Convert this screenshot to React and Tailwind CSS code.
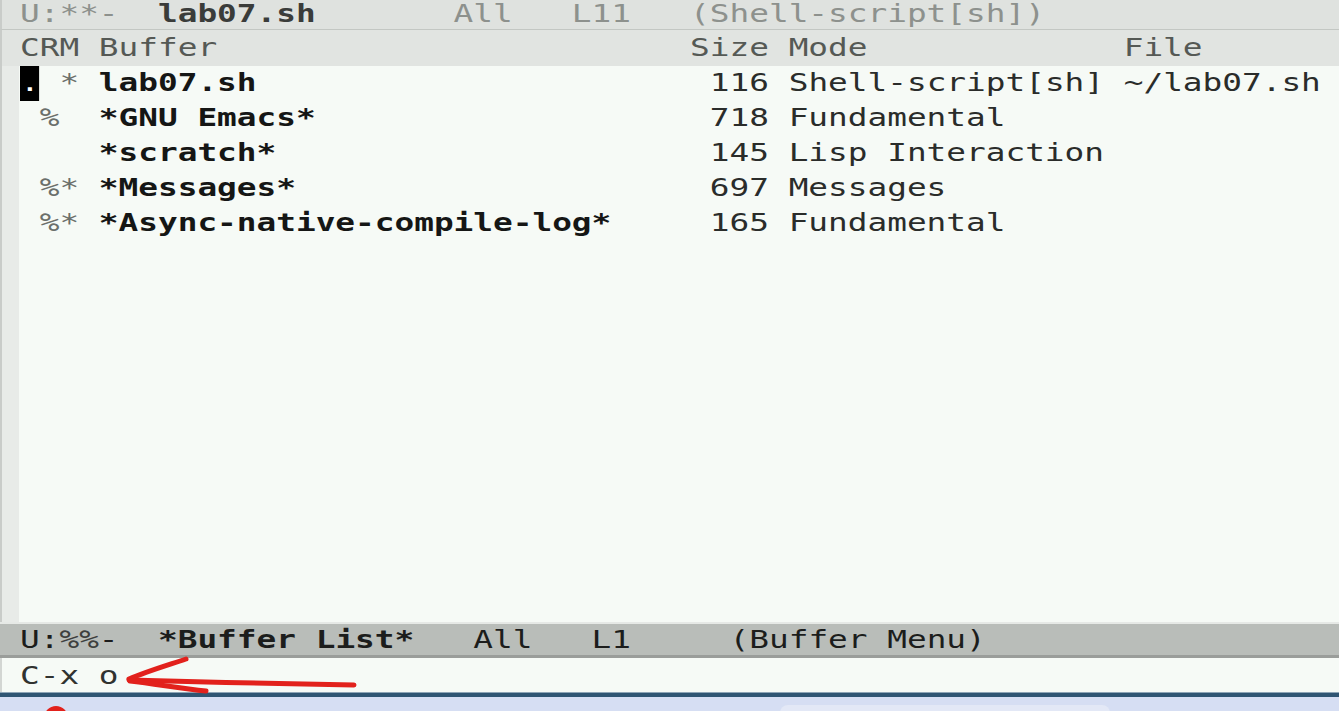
import React from "react";

function Line({ children, className = "" }) {
  return (
    <div className={`pl-[20px] whitespace-pre ${className}`}>
      <span className="inline-block origin-left scale-x-[1.364]">{children}</span>
    </div>
  );
}

const rows = [
  { crm: " * ", name: "lab07.sh", size: "116", mode: "Shell-script[sh]", file: "~/lab07.sh", cursor: true },
  { crm: " %  ", name: "*GNU Emacs*", size: "718", mode: "Fundamental", file: "" },
  { crm: "    ", name: "*scratch*", size: "145", mode: "Lisp Interaction", file: "" },
  { crm: " %* ", name: "*Messages*", size: "697", mode: "Messages", file: "" },
  { crm: " %* ", name: "*Async-native-compile-log*", size: "165", mode: "Fundamental", file: "" },
];

function pad(s, n) {
  return s + " ".repeat(Math.max(0, n - s.length));
}

export default function App() {
  return (
    <div className="relative flex h-[711px] w-[1339px] flex-col overflow-hidden bg-[#f6faf6] font-['DejaVu_Sans_Mono','Liberation_Mono',monospace] text-[24px]">
      {/* top (inactive) mode line */}
      <div className="h-[30px] shrink-0 border-b border-l-2 border-b-[#c3c7c3] border-l-[#c9ccc9] bg-[#dfe2df] leading-[28px] text-[#8d918d]">
        <Line className="-ml-[2px]">
          {"U:**-  "}
          <span className="font-bold text-[#3a3c3a]">lab07.sh</span>
          {"       All   L11   (Shell-script[sh])"}
        </Line>
      </div>

      {/* header line */}
      <div className="h-[36px] shrink-0 border-l-2 border-l-[#c9ccc9] bg-[#e1e4e1] leading-[37px] text-[#555955]">
        <Line className="-ml-[2px]">{"CRM Buffer                        Size Mode             File"}</Line>
      </div>

      {/* body */}
      <div className="flex min-h-0 flex-1">
        <div className="w-[19px] shrink-0 border-l-2 border-l-[#c9ccc9] bg-[#e8ebe8]" />
        <div className="flex-1 text-[#2a2c2a]">
          {rows.map((r, i) => (
            <div key={i} className="-ml-[19px] h-[35px] leading-[35px]">
              <Line>
                {r.cursor ? (
                  <span className="inline-block h-[35px] bg-black text-white">.</span>
                ) : null}
                <span className="text-[#6b6f6b]">{r.crm}</span>
                <span className="font-bold text-[#151615]">{pad(r.name, 31)}</span>
                {r.size + " " + pad(r.mode, 17) + r.file}
              </Line>
            </div>
          ))}
        </div>
      </div>

      {/* bottom (active) mode line */}
      <div className="h-[36px] shrink-0 border-t-2 border-b-[3px] border-t-[#e6e9e6] border-b-[#9a9d9a] bg-[#b9bdb9] pt-[2px] leading-[29px] text-[#1c1d1c]">
        <Line>
          {"U:"}
          <span className="text-[#3e403e]">%%</span>
          {"-  "}
          <span className="font-bold">*Buffer List*</span>
          {"   All   L1     (Buffer Menu)"}
        </Line>
      </div>

      {/* minibuffer */}
      <div className="h-[34px] shrink-0 border-l-2 border-l-[#d3d6d3] bg-[#f6faf6] leading-[36px] text-[#303230]">
        <Line className="-ml-[2px]">{"C-x o"}</Line>
      </div>

      {/* desktop edge */}
      <div className="h-[1px] shrink-0 bg-[#8ea5b6]" />
      <div className="h-[4px] shrink-0 bg-[#2f5573]" />
      <div className="relative h-[14px] shrink-0 bg-[#d6def3]">
        <div className="absolute left-[780px] top-[8px] h-[30px] w-[330px] rounded-[8px] bg-[#e3e8f6]" />
      </div>

      {/* annotation overlay */}
      <svg className="pointer-events-none absolute left-0 top-0" width="1339" height="711" viewBox="0 0 1339 711">
        <g stroke="#e2211c" strokeWidth="5" strokeLinecap="round" fill="none">
          <path d="M129 680 C 200 682, 290 684, 354 685" />
          <path d="M186 659 C 165 666, 145 672, 129 679" />
          <path d="M130 681 C 155 684, 180 688, 206 691" />
        </g>
        <circle cx="56" cy="718" r="12" fill="#e2211c" />
      </svg>
    </div>
  );
}
